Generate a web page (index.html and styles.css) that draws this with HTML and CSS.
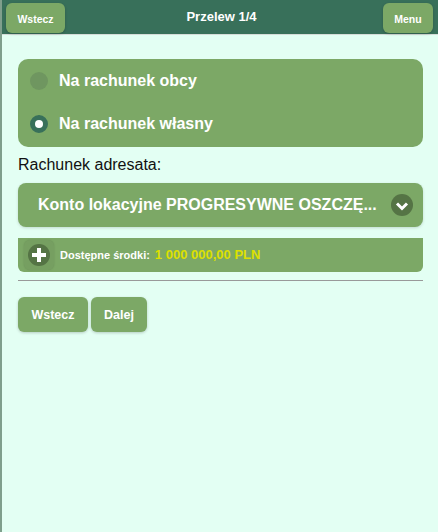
FILE: index.html
```html
<!DOCTYPE html>
<html lang="pl">
<head>
    <meta charset="UTF-8">
    <meta name="viewport" content="width=device-width, initial-scale=1.0">
    <title>Przelew 1/4</title>
    <link rel="stylesheet" href="styles.css">
</head>
<body>

<div class="header">
    <a class="btn btn-small">Wstecz</a>
    <h1 class="title">Przelew 1/4</h1>
    <a class="btn btn-small btn-menu">Menu</a>
</div>

<div class="content">
    <div class="radio-group">
        <div class="radio-row"><span class="radio"></span>Na rachunek obcy</div>
        <div class="radio-row"><span class="radio radio-on"></span>Na rachunek własny</div>
    </div>

    <p class="label">Rachunek adresata:</p>

    <div class="select">
        <span class="select-text">Konto lokacyjne PROGRESYWNE OSZCZĘ...</span>
        <span class="icon">
            <svg width="22" height="22" viewBox="0 0 22 22"><path d="M6 9.5 11 14.5l5-5" fill="none" stroke="#fff" stroke-width="3"/></svg>
        </span>
    </div>

    <div class="funds">
        <span class="plus-btn">
            <span class="icon">
                <svg width="22" height="22" viewBox="0 0 22 22"><path d="M11 4v14M4 11h14" fill="none" stroke="#fff" stroke-width="4"/></svg>
            </span>
        </span>
        <span class="funds-label">Dostępne środki:</span>
        <span class="funds-amount">1 000 000,00 PLN</span>
    </div>

    <hr class="divider">

    <div class="actions">
        <a class="btn btn-wide">Wstecz</a>
        <a class="btn btn-wide">Dalej</a>
    </div>
</div>

</body>
</html>
```

FILE: styles.css
```css
html, body {
    height: 100%;
}
body {
    margin: 0;
    font-family: "Liberation Sans", Arial, sans-serif;
    background-color: #e3fff3;
    border-left: 2px solid #7f9f8c;
    box-sizing: border-box;
    color: #111;
}
.header {
    height: 35px;
    box-sizing: border-box;
    background-color: #38705a;
    border-bottom: 1px solid #d5dcd8;
    display: flex;
    justify-content: space-between;
    align-items: flex-start;
    padding: 3px 5px 0 4px;
}
.title {
    margin: 0;
    padding: 7px 5px 0 0;
    font-size: 13px;
    font-weight: bold;
    line-height: 14px;
    color: #fff;
}
.btn {
    display: flex;
    align-items: center;
    justify-content: center;
    background-color: #7ca866;
    border-radius: 6px;
    box-shadow: 0 1px 3px rgba(0, 0, 0, 0.2);
    color: #fff;
    font-weight: bold;
}
.btn-small {
    width: 59px;
    height: 30px;
    font-size: 10.5px;
    padding-top: 1px;
    box-sizing: border-box;
}
.btn-menu {
    width: 50px;
}
.content {
    padding: 24px 15px 0 16px;
}
.radio-group {
    background-color: #7ca866;
    border-radius: 10px;
    height: 88px;
    color: #fff;
    font-size: 16px;
    font-weight: bold;
}
.radio-row {
    height: 43.5px;
    display: flex;
    align-items: center;
    padding-left: 12px;
}
.radio {
    width: 18px;
    height: 18px;
    border-radius: 50%;
    background-color: #6f9660;
    margin-right: 11px;
    box-sizing: border-box;
}
.radio-on {
    background-color: #38705a;
    border: 5px solid #38705a;
}
.radio-on::after {
    content: "";
    display: block;
    width: 8px;
    height: 8px;
    border-radius: 50%;
    background-color: #fff;
}
.label {
    margin: 0;
    padding-top: 9px;
    height: 36px;
    box-sizing: border-box;
    font-size: 16px;
    line-height: 18px;
}
.select {
    height: 44px;
    background-color: #7ca866;
    border-radius: 8px;
    box-shadow: 0 1px 3px rgba(0, 0, 0, 0.15);
    display: flex;
    align-items: center;
    justify-content: space-between;
    padding: 0 10px 0 20px;
    color: #fff;
    font-size: 16px;
    font-weight: bold;
}
.select-text {
    white-space: nowrap;
}
.icon {
    width: 22px;
    height: 22px;
    border-radius: 50%;
    background-color: #557445;
    display: block;
}
.icon svg {
    display: block;
}
.funds {
    margin-top: 11px;
    height: 34px;
    background-color: #7ca866;
    border-radius: 0 0 6px 6px;
    display: flex;
    align-items: center;
    padding-left: 6px;
}
.plus-btn {
    width: 30px;
    height: 30px;
    border-radius: 6px;
    background-color: #769f61;
    box-shadow: 0 0 2px rgba(0, 0, 0, 0.15);
    display: flex;
    align-items: center;
    justify-content: center;
    margin-right: 6px;
}
.funds-label {
    color: #fff;
    font-size: 11px;
    font-weight: bold;
    margin-right: 5px;
}
.funds-amount {
    color: #dde000;
    font-size: 13px;
    font-weight: bold;
    padding-bottom: 2px;
}
.divider {
    margin: 8px 0 0;
    border: 0;
    height: 1px;
    background-color: #999;
}
.actions {
    display: flex;
    gap: 3px;
    margin-top: 16px;
}
.btn-wide {
    height: 35px;
    font-size: 12.5px;
    width: 70px;
}
.btn-wide + .btn-wide {
    width: 56px;
}
```
